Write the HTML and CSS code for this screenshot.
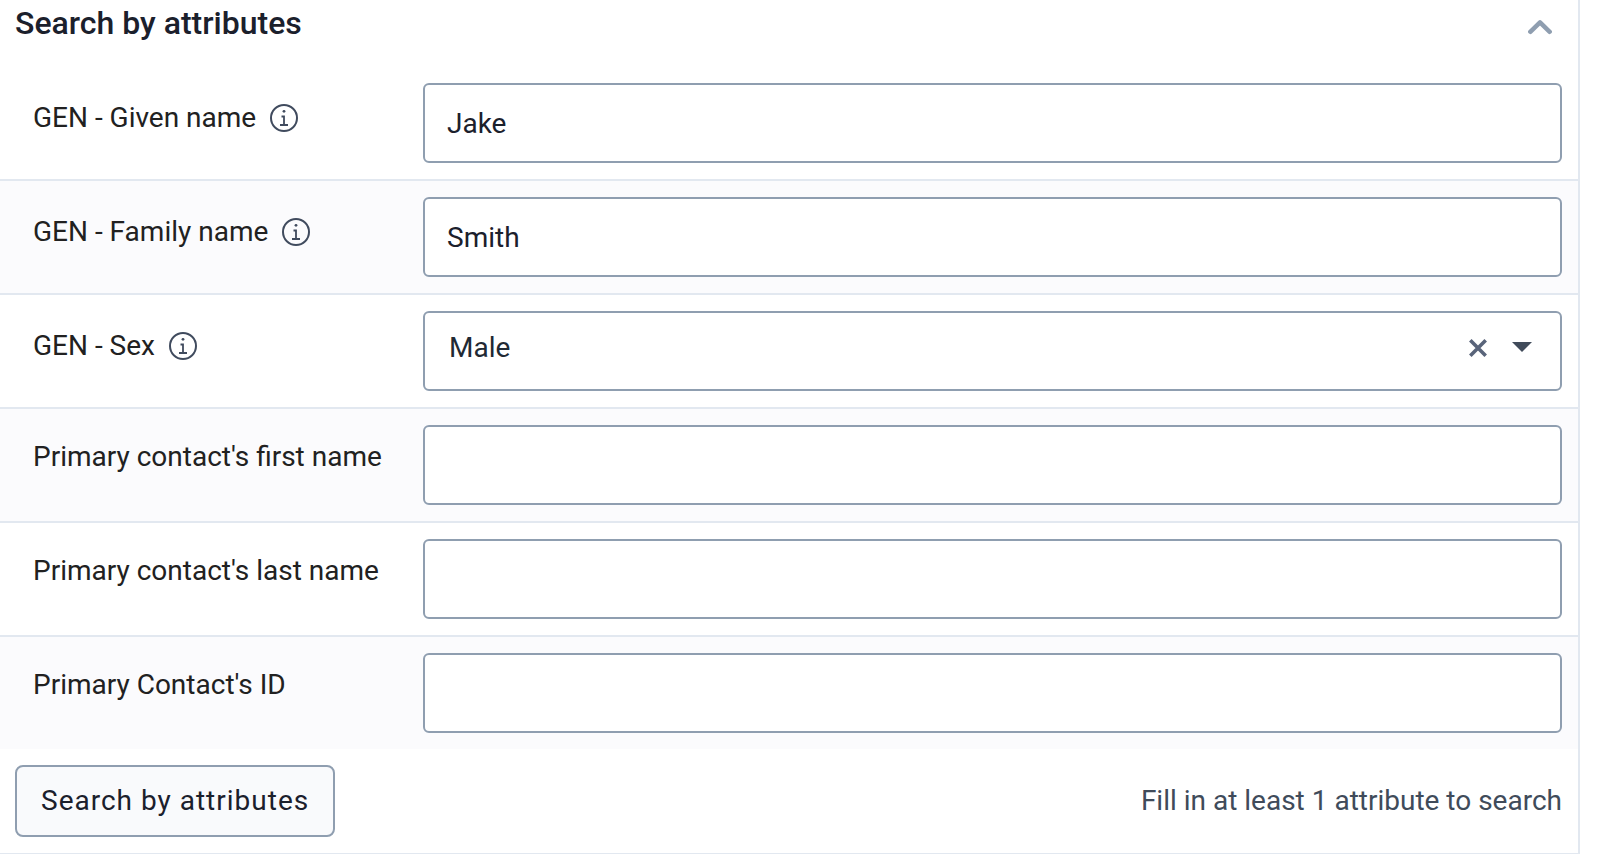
FILE: index.html
```html
<!DOCTYPE html>
<html lang="en">
<head>
<meta charset="utf-8">
<meta name="viewport" content="width=device-width, initial-scale=1">
<title>Search by attributes</title>
<link rel="stylesheet" href="styles.css">
</head>
<body>
<svg class="sprite" aria-hidden="true">
  <symbol id="info" viewBox="0 0 28 28">
    <circle cx="14" cy="14" r="13" fill="none" stroke="currentColor" stroke-width="2"/>
    <circle cx="14" cy="7.300" r="1.400" fill="currentColor"/>
    <path d="M11.500 12.500h2.500v8.500M10 21h8" fill="none" stroke="currentColor" stroke-width="1.800"/>
  </symbol>
</svg>
<form class="panel">
  <header class="panel-header">
    <h2 class="title">Search by attributes</h2>
    <button class="icon-button toggle" type="button" aria-label="Collapse">
      <svg width="24" height="24" viewBox="0 0 24 24"><path d="M2.300 16.800L12 7.300l9.700 9.500" fill="none" stroke="currentColor" stroke-width="4.500" stroke-linecap="round" stroke-linejoin="round"/></svg>
    </button>
  </header>
  <div class="row">
    <div class="label"><label for="given">GEN - Given name</label><svg class="info"><use href="#info"/></svg></div>
    <input class="field" id="given" type="text" value="Jake">
  </div>
  <div class="row">
    <div class="label"><label for="family">GEN - Family name</label><svg class="info"><use href="#info"/></svg></div>
    <input class="field" id="family" type="text" value="Smith">
  </div>
  <div class="row">
    <div class="label"><label for="sex">GEN - Sex</label><svg class="info"><use href="#info"/></svg></div>
    <div class="select-wrap">
      <select class="field select" id="sex"><option>Male</option><option>Female</option></select>
      <div class="select-tools">
        <button class="icon-button clear" type="button" aria-label="Clear">
          <svg width="18" height="18" viewBox="0 0 18 18"><path d="M1.300 1.300l15.400 15.400M16.700 1.300L1.300 16.700" fill="none" stroke="currentColor" stroke-width="3.600"/></svg>
        </button>
        <svg class="arrow" width="20" height="10" viewBox="0 0 20 10"><path d="M0 0h20L10 10z" fill="currentColor"/></svg>
      </div>
    </div>
  </div>
  <div class="row">
    <div class="label"><label for="first">Primary contact's first name</label></div>
    <input class="field" id="first" type="text">
  </div>
  <div class="row">
    <div class="label"><label for="last">Primary contact's last name</label></div>
    <input class="field" id="last" type="text">
  </div>
  <div class="row">
    <div class="label"><label for="contact-id">Primary Contact's ID</label></div>
    <input class="field" id="contact-id" type="text">
  </div>
  <footer class="panel-footer">
    <button class="search" type="button">Search by attributes</button>
    <span class="hint">Fill in at least 1 attribute to search</span>
  </footer>
</form>
</body>
</html>
```
FILE: styles.css
```css
* {
  box-sizing: border-box;
}

body {
  margin: 0;
  background: #fff;
  color: #212121;
  font: 400 28px/32px Roboto, sans-serif;
}

.sprite {
  display: none;
}

.panel {
  margin-right: 18px;
  border-right: 2px solid #e2e8f0;
  border-bottom: 1px solid #e2e8f0;
}

.panel-header {
  display: flex;
  justify-content: space-between;
  align-items: flex-start;
  padding: 3px 26px 24px 15px;
}

.title {
  margin: 0;
  color: #1b202c;
  font-size: 32px;
  font-weight: 500;
  line-height: 40px;
}

.icon-button {
  display: flex;
  padding: 0;
  border: 0;
  background: none;
  cursor: pointer;
}

.toggle {
  margin-top: 12px;
  color: #8f9eb0;
}

.row {
  display: grid;
  grid-template-columns: 390px 1fr;
  align-items: start;
  padding: 16px 16px 16px 33px;
  border-bottom: 2px solid #e2e8f0;
}

.row:nth-of-type(even) {
  background: #fbfbfd;
}

.row:last-of-type {
  border-bottom: 0;
}

.label {
  display: flex;
  align-items: center;
  gap: 14px;
  padding-top: 16px;
}

.label:has(.info) {
  padding-top: 19px;
}

.info {
  width: 28px;
  height: 28px;
  color: #404b5e;
}

.field {
  display: block;
  width: 100%;
  height: 80px;
  padding: 0 22px;
  border: 2px solid #8f9eb0;
  border-radius: 6px;
  background: #fff;
  color: #1b202c;
  font: inherit;
}

.select-wrap {
  position: relative;
}

.select {
  appearance: none;
  padding: 0 120px 6px 24px;
  color: #212934;
}

.select-tools {
  position: absolute;
  top: 22px;
  right: 30px;
  display: flex;
  align-items: center;
  gap: 25px;
  height: 30px;
}

.clear {
  color: #59647a;
}

.arrow {
  margin-bottom: 2px;
  color: #404b5a;
  pointer-events: none;
}

.panel-footer {
  display: flex;
  justify-content: space-between;
  align-items: center;
  padding: 16px 16px 16px 15px;
}

.search {
  height: 72px;
  padding: 0 24px;
  border: 2px solid #8f9eb0;
  border-radius: 8px;
  background: #f9fafc;
  color: #1b202c;
  font: inherit;
  letter-spacing: 1px;
}

.hint {
  color: #404b5a;
}
```
